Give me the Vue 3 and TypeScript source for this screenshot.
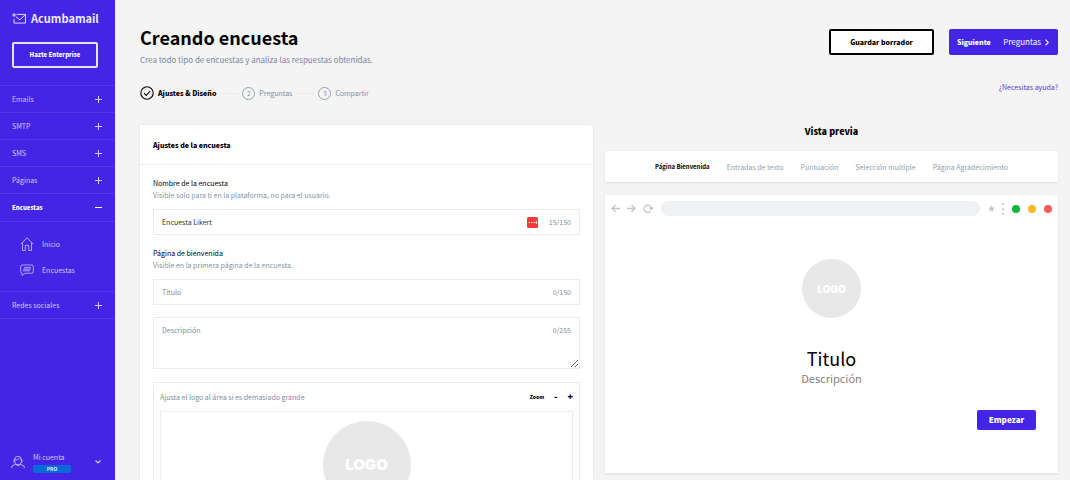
<script setup lang="ts">
import { ref } from 'vue'

interface MenuEntry {
  label: string
  open?: boolean
}

const menu: MenuEntry[] = [
  { label: 'Emails' },
  { label: 'SMTP' },
  { label: 'SMS' },
  { label: 'Páginas' },
  { label: 'Encuestas', open: true },
  { label: 'Redes sociales' },
]

const tabs: string[] = [
  'Página Bienvenida',
  'Entradas de texto',
  'Puntuación',
  'Selección multiple',
  'Página Agradecimiento',
]
const activeTab = ref<string>(tabs[0])

const surveyName = ref<string>('Encuesta Likert')
const title = ref<string>('')
const description = ref<string>('')
</script>

<template>
  <div class="shell">
    <aside class="sidebar">
      <a class="brand" href="#">
        <svg class="brand-icon" viewBox="0 0 16 12" fill="none" stroke="currentColor" stroke-width="1">
          <path d="M5 1.5h9.5v9.5h-12.5V6.500" />
          <path d="M4 4l4.500 3.500L14 2" />
          <path d="M2.200 0v4.400M0 2.200h4.400" />
        </svg>
        <span>Acumbamail</span>
      </a>
      <button class="enterprise" type="button">Hazte Enterprise</button>
      <nav class="menu">
        <div v-for="entry in menu" :key="entry.label" class="menu-group">
          <button class="menu-row" :class="{ open: entry.open }" type="button">
            <span>{{ entry.label }}</span>
            <svg class="sign" viewBox="0 0 7 7" stroke="currentColor" stroke-width="1">
              <path d="M0 3.500h7" />
              <path v-if="!entry.open" d="M3.500 0v7" />
            </svg>
          </button>
          <div v-if="entry.open" class="submenu">
            <a href="#">
              <svg viewBox="0 0 14 14" fill="none" stroke="currentColor" stroke-width="0.8">
                <path d="M0.800 7.200L7 0.800l6.200 6.400M2.500 5.800v7.700h2.800V8.300h3.400v5.200h2.800V5.800" />
              </svg>
              <span>Inicio</span>
            </a>
            <a href="#">
              <svg viewBox="0 0 14 14" fill="none" stroke="currentColor" stroke-width="0.8">
                <path d="M2.300 2h9.400q1.600 0 1.600 1.600v5q0 1.600-1.600 1.600H5L2 12.500v-2.300q-1.300-.2-1.300-1.600v-5Q.7 2 2.300 2z" />
                <path d="M4 4.600h7M3.200 6.200h7.600M3 7.800h7" />
              </svg>
              <span>Encuestas</span>
            </a>
          </div>
        </div>
      </nav>
      <button class="account" type="button">
        <svg class="avatar" viewBox="0 0 14 14" fill="none" stroke="currentColor" stroke-width="0.8">
          <path d="M3.600 5a3.400 3.800 0 0 1 6.800 0v1.200a3.400 3.600 0 0 1-6.800 0zM3.600 4.800q3.400.6 5-1.600l1.800 1.600M3 4.500v3M11 4.500v3" />
          <path d="M5 9.200L.8 11v2.200M9 9.200l4.200 1.800v2.200M5 9.500l2 1.500 2-1.500" />
        </svg>
        <span class="account-text">
          <span>Mi cuenta</span>
          <span class="badge">PRO</span>
        </span>
        <svg class="caret" viewBox="0 0 6 4" fill="none" stroke="currentColor" stroke-width="1.200">
          <path d="M0.500 0.500L3 3l2.500-2.500" />
        </svg>
      </button>
    </aside>

    <main class="main">
      <header class="top">
        <div class="heading">
          <h1>Creando encuesta</h1>
          <p>Crea todo tipo de encuestas y analiza las respuestas obtenidas.</p>
        </div>
        <div class="actions">
          <button class="draft" type="button">Guardar borrador</button>
          <button class="next" type="button">
            <b>Siguiente</b>
            <span>Preguntas</span>
            <svg viewBox="0 0 4 7" fill="none" stroke="currentColor" stroke-width="1.100">
              <path d="M0.500 0.700L3.300 3.500 0.500 6.300" />
            </svg>
          </button>
        </div>
      </header>

      <div class="progress">
        <ol class="steps">
          <li class="current">
            <svg viewBox="0 0 14 14" fill="none" stroke="currentColor" stroke-width="1.100">
              <circle cx="7" cy="7" r="6.200" />
              <path d="M4 7.200l2.200 2.200L10.200 5" />
            </svg>
            <span>Ajustes &amp; Diseño</span>
          </li>
          <li><i>2</i><span>Preguntas</span></li>
          <li><i>3</i><span>Compartir</span></li>
        </ol>
        <a class="help" href="#">¿Necesitas ayuda?</a>
      </div>

      <div class="columns">
        <section class="panel">
          <h2>Ajustes de la encuesta</h2>
          <form class="form" @submit.prevent>
            <div class="field">
              <label for="survey-name">Nombre de la encuesta</label>
              <p>Visible solo para ti en la plataforma, no para el usuario.</p>
              <div class="control">
                <input id="survey-name" v-model="surveyName" type="text" maxlength="150" />
                <svg class="filler" viewBox="0 0 11 11">
                  <rect width="11" height="11" rx="1.500" fill="#f23a38" />
                  <path d="M1.500 5.500h1.300M4 5.500h1.300M6.500 5.500h1.300M9.300 4v3" stroke="#fff" stroke-width="1" />
                </svg>
                <span class="count">{{ surveyName.length }}/150</span>
              </div>
            </div>
            <div class="field">
              <label for="survey-title">Página de bienvenida</label>
              <p>Visible en la primera página de la encuesta.</p>
              <div class="control">
                <input id="survey-title" v-model="title" type="text" placeholder="Título" />
                <span class="count">{{ title.length }}/150</span>
              </div>
            </div>
            <div class="control tall">
              <textarea v-model="description" aria-label="Descripción" placeholder="Descripción"></textarea>
              <span class="count">{{ description.length }}/255</span>
            </div>
            <div class="logo-box">
              <div class="logo-bar">
                <p>Ajusta el logo al área si es demasiado grande</p>
                <div class="zoom">
                  <span>Zoom</span>
                  <button type="button" aria-label="Reducir">-</button>
                  <button type="button" aria-label="Ampliar">+</button>
                </div>
              </div>
              <div class="logo-area"><div class="logo big">LOGO</div></div>
            </div>
          </form>
        </section>

        <section class="preview">
          <h2>Vista previa</h2>
          <nav class="tabs">
            <button
              v-for="tab in tabs"
              :key="tab"
              type="button"
              :class="{ active: tab === activeTab }"
              @click="activeTab = tab"
            >{{ tab }}</button>
          </nav>
          <div class="browser">
            <div class="chrome">
              <svg class="arrow" viewBox="0 0 9 9" fill="none" stroke="currentColor" stroke-width="1.300"><path d="M9 4.500H1M4.500 1L1 4.500 4.500 8" /></svg>
              <svg class="arrow" viewBox="0 0 9 9" fill="none" stroke="currentColor" stroke-width="1.300"><path d="M0 4.500h8M4.500 1L8 4.500 4.500 8" /></svg>
              <svg class="reload" viewBox="0 0 11 9" fill="none" stroke="currentColor" stroke-width="1.300"><path d="M7.500 7.300A3.700 3.700 0 1 1 8.400 4" /><path d="M5.800 3.400h5.200L8.400 6.400z" fill="currentColor" stroke="none" /></svg>
              <div class="url"></div>
              <svg class="star" viewBox="0 0 10 10" fill="currentColor"><path d="M5 0.500l1.400 3.100 3.300.3-2.500 2.200.8 3.400L5 7.700 2 9.500l.8-3.400L.3 3.900l3.300-.3z" /></svg>
              <svg class="kebab" viewBox="0 0 2 12" fill="currentColor"><circle cx="1" cy="1" r="1" /><circle cx="1" cy="6" r="1" /><circle cx="1" cy="11" r="1" /></svg>
              <span class="dot green"></span>
              <span class="dot amber"></span>
              <span class="dot red"></span>
            </div>
            <div class="welcome">
              <div class="logo">LOGO</div>
              <h3>{{ title || 'Titulo' }}</h3>
              <p>{{ description || 'Descripción' }}</p>
              <button class="start" type="button">Empezar</button>
            </div>
          </div>
        </section>
      </div>
    </main>
  </div>
</template>

<style>
body {
  margin: 0;
  background: #f4f4f4;
}
</style>

<style scoped>
* {
  box-sizing: border-box;
}
.shell {
  display: flex;
  height: 100vh;
  overflow: hidden;
  font: 7px/12px "Noto Sans CJK SC", "Noto Sans", sans-serif;
  color: #000;
}
h1, h2, h3, p, ol {
  margin: 0;
  padding: 0;
}
button, input, textarea {
  font: inherit;
  color: inherit;
}
button {
  padding: 0;
  border: 0;
  background: none;
  cursor: pointer;
}
a {
  color: inherit;
  text-decoration: none;
}
svg {
  flex: none;
}

.sidebar {
  flex: 0 0 115px;
  display: flex;
  flex-direction: column;
  background: #4425e5;
  color: #d0c8fb;
}
.brand {
  display: flex;
  align-items: center;
  gap: 4px;
  margin: 10px 12px 16px;
  color: #ece9ff;
  font-size: 11px;
  font-weight: 700;
  line-height: 16px;
}
.brand-icon {
  width: 15px;
  height: 11px;
}
.enterprise {
  height: 26px;
  margin: 0 17px 17px 12px;
  border: 2px solid #e6e2ff;
  border-radius: 2px;
  color: #fff;
  font-size: 6px;
  font-weight: 900;
}
.menu-row {
  display: flex;
  align-items: center;
  justify-content: space-between;
  width: 100%;
  height: 27px;
  padding: 0 13px 0 12px;
  border-top: 1px solid #5338e9;
}
.menu-row.open {
  height: 28px;
  color: #fff;
  font-size: 6px;
  font-weight: 900;
}
.sign {
  width: 7px;
  height: 7px;
}
.submenu {
  display: flex;
  flex-direction: column;
  gap: 14px;
  padding: 16px 20px 15px;
  border-top: 1px solid #5338e9;
}
.submenu a {
  display: flex;
  align-items: center;
  gap: 8px;
  height: 12px;
}
.submenu svg {
  width: 14px;
  height: 14px;
}
.menu {
  border-bottom: 1px solid #5338e9;
}
.account {
  display: flex;
  align-items: center;
  margin: auto 14px 7px 11px;
  text-align: left;
}
.avatar {
  width: 14px;
  height: 14px;
  margin-right: 8px;
}
.account-text {
  display: flex;
  flex-direction: column;
  gap: 2px;
}
.badge {
  width: 38px;
  border-radius: 2px;
  background: #0869d8;
  color: #e8f2ff;
  font-size: 5px;
  font-weight: 700;
  line-height: 8px;
  text-align: center;
}
.caret {
  width: 6px;
  height: 4px;
  margin-left: auto;
}

.main {
  flex: 1;
  min-width: 0;
  display: flex;
  flex-direction: column;
  padding: 26px 12px 0 25px;
}
.top {
  display: flex;
  justify-content: space-between;
}
h1 {
  font-size: 18px;
  font-weight: 700;
  line-height: 22px;
}
.heading p {
  margin-top: 6px;
  color: #7485a0;
  font-size: 8px;
}
.actions {
  display: flex;
  gap: 15px;
  height: 26px;
  margin-top: 3px;
  font-size: 7px;
}
.draft {
  width: 105px;
  border: 2px solid #000;
  border-radius: 2px;
  background: #fff;
  font-weight: 900;
}
.next {
  display: flex;
  align-items: center;
  justify-content: space-between;
  width: 109px;
  padding: 0 9px 0 8px;
  border-radius: 2px;
  background: #4425e5;
  color: #fff;
}
.next b {
  font-weight: 900;
}
.next span {
  margin-left: auto;
  font-size: 8px;
}
.next svg {
  width: 4px;
  height: 7px;
  margin-left: 4px;
}
.progress {
  display: flex;
  justify-content: space-between;
  margin-top: 13px;
}
.steps {
  display: flex;
  margin-top: 7px;
  list-style: none;
  color: #78919c;
}
.steps li {
  display: flex;
  align-items: center;
}
.steps li + li::before {
  content: "";
  width: 18px;
  height: 1px;
  margin: 0 4px;
  background: #e9e9e9;
}
.steps svg {
  width: 14px;
  height: 14px;
  margin-right: 4px;
}
.steps i {
  width: 13px;
  height: 13px;
  margin-right: 4px;
  border: 1px solid #91a5ae;
  border-radius: 50%;
  font-size: 6px;
  font-style: normal;
  line-height: 11px;
  text-align: center;
}
.steps .current {
  color: #000;
  font-weight: 900;
}
.help {
  margin-top: 2px;
  color: #5038ce;
}

.columns {
  flex: 1;
  min-height: 0;
  display: grid;
  grid-template-columns: minmax(0, 1fr) minmax(0, 1fr);
  gap: 12px;
  margin-top: 25px;
}
.panel {
  overflow-y: auto;
  scrollbar-width: none;
  background: #fff;
  box-shadow: 0 0 2px #dcdcdc;
}
.panel h2 {
  padding: 14px 13px 13px;
  border-bottom: 1px solid #ededed;
  font-size: 7px;
  font-weight: 900;
  line-height: 12px;
}
.form {
  display: flex;
  flex-direction: column;
  gap: 12px;
  padding: 12px 13px;
}
.field label {
  display: block;
}
.field p {
  margin-bottom: 8px;
  color: #8492a6;
}
.control {
  display: flex;
  align-items: center;
  height: 26px;
  padding: 0 8px;
  border: 1px solid #e9ebec;
}
.control input,
.control textarea {
  flex: 1;
  min-width: 0;
  padding: 0;
  border: 0;
  outline: 0;
  background: none;
  color: #333;
}
.control ::placeholder {
  color: #78909c;
  opacity: 1;
}
.count {
  color: #78909c;
}
.filler {
  width: 11px;
  height: 11px;
  margin-right: 11px;
}
.control.tall {
  position: relative;
  height: auto;
  padding: 0;
}
.control.tall textarea {
  display: block;
  height: 50px;
  padding: 6px 8px;
  resize: vertical;
}
.control.tall .count {
  position: absolute;
  top: 6px;
  right: 8px;
}
.logo-box {
  margin-top: 1px;
  padding: 8px 6px;
  border: 1px solid #e9ebec;
}
.logo-bar {
  display: flex;
  justify-content: space-between;
  color: #78909c;
}
.zoom {
  display: flex;
  gap: 10px;
  color: #000;
  font-size: 5px;
  font-weight: 900;
}
.zoom button {
  font-size: 9px;
}
.logo-area {
  display: flex;
  justify-content: center;
  margin-top: 8px;
  padding: 9px;
  border: 1px solid #e9ebec;
}
.logo {
  display: grid;
  place-items: center;
  width: 59px;
  height: 59px;
  border-radius: 50%;
  background: #e8e8e8;
  color: #fff;
  font-family: Inter, "Liberation Sans", sans-serif;
  font-size: 10px;
  font-weight: 900;
}
.logo.big {
  width: 88px;
  height: 88px;
  font-size: 15px;
}

.preview h2 {
  font-size: 9px;
  font-weight: 900;
  line-height: 14px;
  text-align: center;
}
.tabs {
  display: flex;
  justify-content: center;
  gap: 17px;
  height: 31px;
  margin: 12px 0 13px;
  border-radius: 2px;
  background: #fff;
  box-shadow: 0 1px 2px #dcdcdc;
  color: #8fa2ac;
}
.tabs .active {
  color: #000;
  font-size: 6px;
  font-weight: 700;
}
.browser {
  padding-bottom: 43px;
  background: #fff;
  box-shadow: 0 1px 2px #dcdcdc;
}
.chrome {
  display: flex;
  align-items: center;
  gap: 7px;
  padding: 6px;
  color: #c4c4c4;
}
.arrow {
  width: 9px;
  height: 9px;
}
.reload {
  width: 11px;
  height: 9px;
}
.url {
  flex: 1;
  height: 15px;
  border-radius: 8px;
  background: #f0f1f5;
}
.star {
  width: 7px;
  height: 7px;
  margin-left: 1px;
}
.kebab {
  width: 2px;
  height: 12px;
  margin-right: 1px;
}
.dot {
  width: 8px;
  height: 8px;
  border-radius: 50%;
}
.dot + .dot {
  margin-left: 1px;
}
.green {
  background: #0fb53a;
}
.amber {
  background: #fbb91f;
}
.red {
  background: #f65c55;
}
.welcome {
  display: flex;
  flex-direction: column;
  align-items: center;
  padding: 37px 22px 0;
}
.welcome h3 {
  margin-top: 28px;
  font-size: 18px;
  font-weight: 400;
  line-height: 24px;
}
.welcome p {
  color: #808080;
  font-size: 11px;
  line-height: 16px;
}
.start {
  align-self: flex-end;
  width: 59px;
  height: 20px;
  margin-top: 24px;
  border-radius: 2px;
  background: #4425e5;
  color: #fff;
  font-size: 8px;
  font-weight: 900;
}
</style>
